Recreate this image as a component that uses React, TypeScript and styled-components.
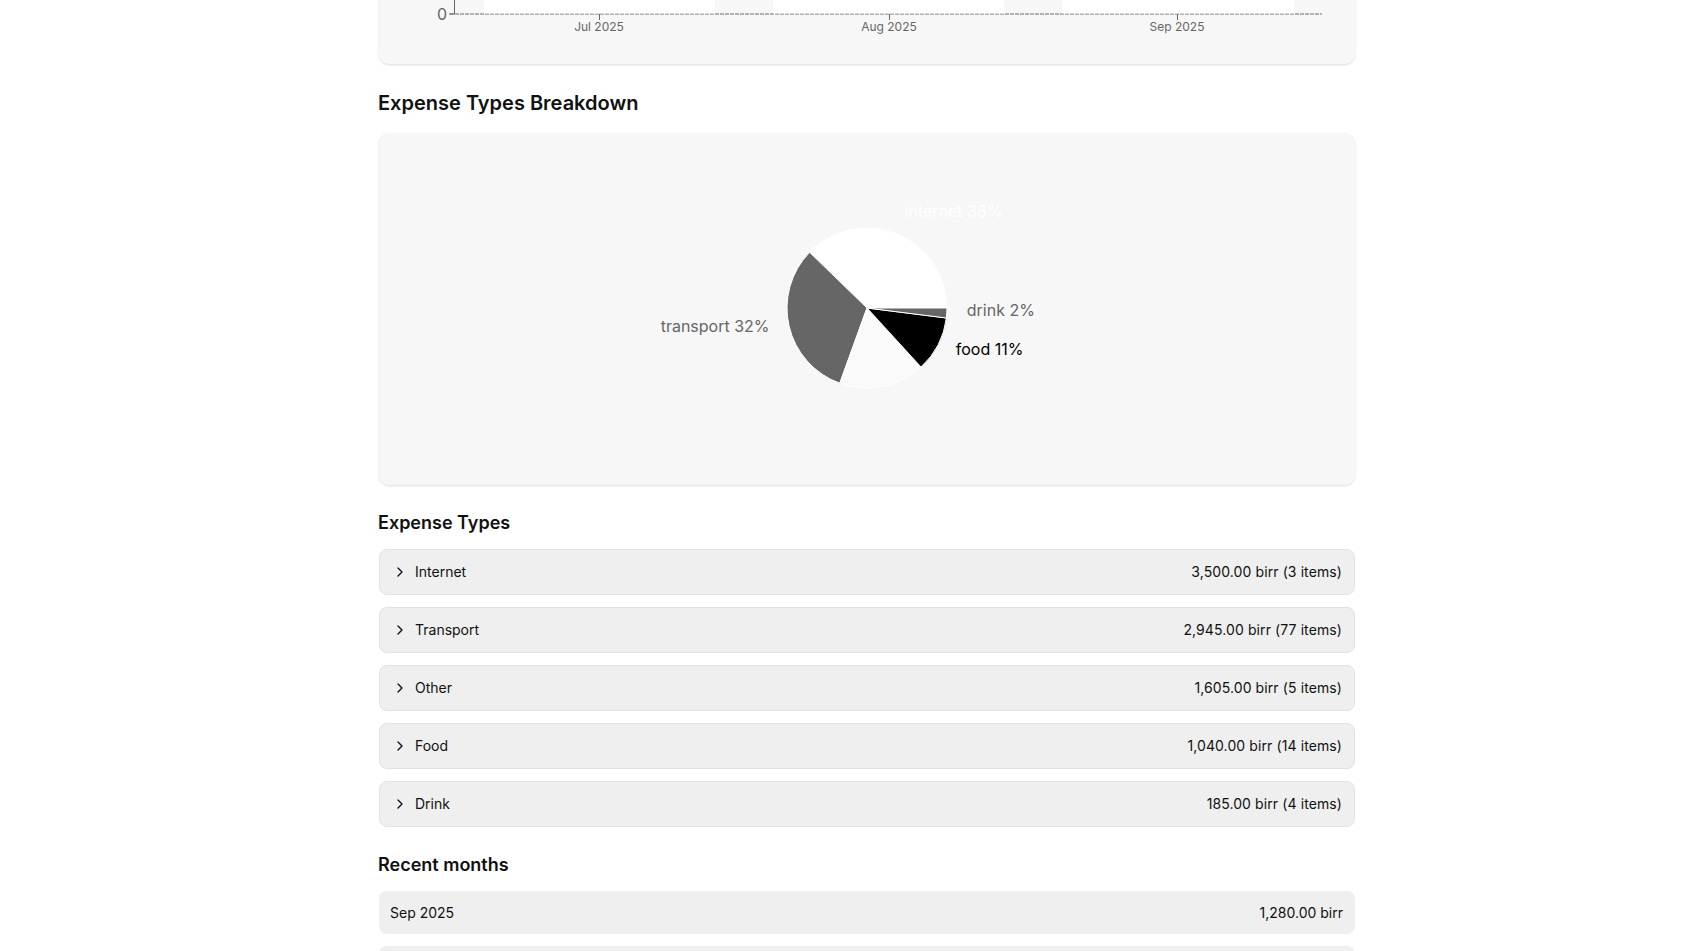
import React from "react";
import styled, { createGlobalStyle } from "styled-components";
import { ChevronRight } from "lucide-react";

const GlobalStyle = createGlobalStyle`
  html, body { margin: 0; padding: 0; background: #ffffff; }
  body {
    font-family: Inter, "Noto Sans", "Liberation Sans", sans-serif;
    color: #111111;
    -webkit-font-smoothing: antialiased;
  }
  * { box-sizing: border-box; }
`;

const Page = styled.main`
  width: 976px;
  margin-left: 379px;
  display: flex;
  flex-direction: column;
  padding-bottom: 40px;
`;

const Card = styled.section<{ $height: number }>`
  height: ${(p) => p.$height}px;
  background: #f7f7f7;
  border-radius: 10px;
  box-shadow: 0 1px 3px rgba(0, 0, 0, 0.1), 0 1px 2px rgba(0, 0, 0, 0.04);
  overflow: hidden;
  display: flex;
`;

const ChartCard = styled(Card)`
  margin-top: -236px;
`;

const Heading = styled.h2<{ $size: number; $before: number; $after: number }>`
  margin: ${(p) => p.$before}px 0 ${(p) => p.$after}px -1px;
  font-size: ${(p) => p.$size}px;
  font-weight: 600;
  line-height: 28px;
  color: #111;
`;

const List = styled.div`
  display: flex;
  flex-direction: column;
  gap: 12px;
`;

const TypeRow = styled.div`
  height: 46px;
  display: flex;
  align-items: center;
  padding: 0 12px 0 12px;
  background: #efefef;
  border: 1px solid #e2e2e2;
  border-radius: 8px;
  font-size: 14px;
  line-height: 20px;
  color: #111;
`;

const TypeName = styled.span`
  display: flex;
  align-items: center;
  gap: 7px;
  flex: 1;
`;

const Amount = styled.span`
  font-size: 14px;
  color: #111;
  letter-spacing: 0.1px;
`;

const MonthRow = styled.div`
  height: 43px;
  display: flex;
  align-items: center;
  justify-content: space-between;
  padding: 0 12px 0 11px;
  background: #efefef;
  border-radius: 8px;
  font-size: 14px;
  line-height: 20px;
  color: #111;
`;

const Svg = styled.svg`
  display: block;
  width: 100%;
  height: 100%;
  font-family: Inter, "Noto Sans", "Liberation Sans", sans-serif;
`;

const months = [
  { label: "Jul 2025", x: 220, x0: 105, x1: 336 },
  { label: "Aug 2025", x: 510, x0: 394, x1: 625 },
  { label: "Sep 2025", x: 798, x0: 683, x1: 915 },
];

function BarChart() {
  const base = 250;
  return (
    <Svg viewBox="0 0 976 300">
      <line x1={71} y1={base} x2={943} y2={base} stroke="#9a9a9a" strokeWidth={1.5} strokeDasharray="4 1" />
      {months.map((m) => (
        <rect key={m.label} x={m.x0} y={-10} width={m.x1 - m.x0} height={base - 0.5 + 10} fill="#ffffff" />
      ))}
      <line x1={75.5} y1={0} x2={75.5} y2={base} stroke="#666" />
      <line x1={70} y1={base} x2={75.5} y2={base} stroke="#666" />
      <text x={68} y={base} textAnchor="end" dominantBaseline="central" fontSize={16} fill="#666">
        0
      </text>
      {months.map((m) => (
        <g key={m.label + "t"}>
          <line x1={m.x + 0.5} y1={base} x2={m.x + 0.5} y2={base + 6} stroke="#666" />
          <text x={m.x} y={base + 12} textAnchor="middle" dominantBaseline="central" fontSize={12} fill="#666">
            {m.label}
          </text>
        </g>
      ))}
    </Svg>
  );
}

const types = [
  { name: "Internet", amount: 3500, items: 3, fill: "#ffffff", label: "#ffffff" },
  { name: "Transport", amount: 2945, items: 77, fill: "#666666", label: "#666666" },
  { name: "Other", amount: 1605, items: 5, fill: "#fafafa", label: "#f7f7f7" },
  { name: "Food", amount: 1040, items: 14, fill: "#000000", label: "#000000" },
  { name: "Drink", amount: 185, items: 4, fill: "#666666", label: "#666666" },
];

const fmt = (n: number) =>
  n.toLocaleString("en-US", { minimumFractionDigits: 2, maximumFractionDigits: 2 });

function PieChart() {
  const cx = 488;
  const cy = 175;
  const r = 80;
  const lr = 100;
  const total = types.reduce((s, t) => s + t.amount, 0);
  const pt = (deg: number, rad: number) => {
    const a = (deg * Math.PI) / 180;
    return [cx + rad * Math.cos(a), cy - rad * Math.sin(a)];
  };
  let start = 0;
  const slices = types.map((t) => {
    const pct = t.amount / total;
    const end = start + pct * 360;
    const [x0, y0] = pt(start, r);
    const [x1, y1] = pt(end, r);
    const large = end - start > 180 ? 1 : 0;
    const d = `M${cx},${cy} L${x0},${y0} A${r},${r} 0 ${large} 0 ${x1},${y1} Z`;
    const mid = (start + end) / 2;
    const [lx, ly] = pt(mid, lr);
    start = end;
    return { ...t, d, lx, ly: ly - 4.5, pct };
  });
  return (
    <Svg viewBox="0 0 976 352">
      {slices.map((s) => (
        <path key={s.name} d={s.d} fill={s.fill} stroke="#ffffff" strokeWidth={1} />
      ))}
      {slices.map((s) => (
        <text
          key={s.name + "l"}
          x={s.lx}
          y={s.ly}
          fill={s.label}
          fontSize={16}
          textAnchor={s.lx > cx ? "start" : "end"}
          dominantBaseline="central"
        >
          {`${s.name.toLowerCase()} ${(s.pct * 100).toFixed(0)}%`}
        </text>
      ))}
    </Svg>
  );
}

const recent = [
  { month: "Sep 2025", amount: 1280 },
  { month: "Aug 2025", amount: 3420 },
  { month: "Jul 2025", amount: 3875 },
];

export default function App() {
  return (
    <>
      <GlobalStyle />
      <Page>
        <ChartCard $height={300}>
          <BarChart />
        </ChartCard>

        <Heading $size={20} $before={25} $after={16}>Expense Types Breakdown</Heading>
        <Card $height={352}>
          <PieChart />
        </Card>

        <Heading $size={18} $before={24} $after={12}>Expense Types</Heading>
        <List>
          {types.map((t) => (
            <TypeRow key={t.name}>
              <TypeName>
                <ChevronRight size={16} strokeWidth={2} />
                {t.name}
              </TypeName>
              <Amount>{`${fmt(t.amount)} birr (${t.items} items)`}</Amount>
            </TypeRow>
          ))}
        </List>

        <Heading $size={18} $before={24} $after={12}>Recent months</Heading>
        <List>
          {recent.map((m) => (
            <MonthRow key={m.month}>
              <span>{m.month}</span>
              <span>{`${fmt(m.amount)} birr`}</span>
            </MonthRow>
          ))}
        </List>
      </Page>
    </>
  );
}
